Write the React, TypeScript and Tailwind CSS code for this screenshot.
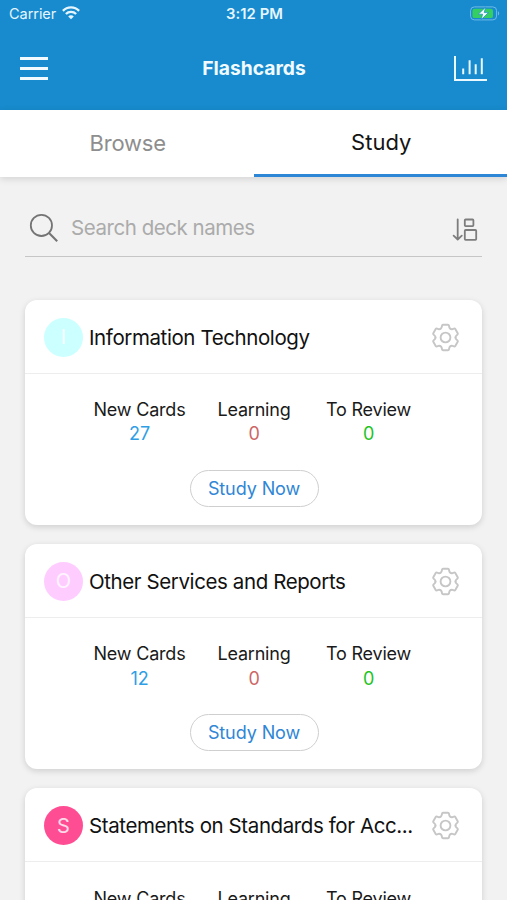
interface Deck {
  id: number;
  name: string;
  color: string;
  newCards: number;
  learning: number;
  toReview: number;
}

const decks: Deck[] = [
  {
    id: 1,
    name: "Information Technology",
    color: "bg-[#ccffff]",
    newCards: 27,
    learning: 0,
    toReview: 0,
  },
  {
    id: 2,
    name: "Other Services and Reports",
    color: "bg-[#ffccff]",
    newCards: 12,
    learning: 0,
    toReview: 0,
  },
  {
    id: 3,
    name: "Statements on Standards for Acc...",
    color: "bg-[#ff4d94]",
    newCards: 18,
    learning: 0,
    toReview: 0,
  },
];

const GearIcon = () => (
  <svg
    width="29"
    height="29"
    viewBox="-14.5 -14.5 29 29"
    fill="none"
    stroke="#c6c6c6"
    strokeWidth="1.9"
    strokeLinecap="round"
  >
    {[0, 60, 120, 180, 240, 300].map((angle) => (
      <path
        key={angle}
        transform={`rotate(${angle})`}
        d="M-5 -8.7Q-4 -9.2 -3.8 -10.3L-3.5 -11.8Q-3.3 -12.7 -2.4 -12.7H2.4Q3.3 -12.7 3.5 -11.8L3.8 -10.3Q4 -9.2 5 -8.7"
      />
    ))}
    <circle r="4.9" />
  </svg>
);

const StatusBar = () => (
  <div className="flex h-7 items-center justify-between pr-[7px] pl-[9px] text-[#e6f6ff]">
    <div className="flex flex-1 items-center gap-[6px]">
      <span className="text-[14.5px] tracking-[-0.05px]">Carrier</span>
      <svg
        className="-mt-[2px]"
        width="18"
        height="14"
        viewBox="0 0 18 14"
        fill="none"
      >
        <g stroke="currentColor" strokeWidth="2.3">
          <path d="M0.9 4.9C5.3 0.3 12.7 0.3 17.1 4.9" />
          <path d="M3.9 8C6.6 5.2 11.4 5.2 14.1 8" />
        </g>
        <path d="M6.2 10.4C7.8 9 10.2 9 11.8 10.4L9 13.3Z" fill="currentColor" />
      </svg>
    </div>
    <span className="text-[14.8px] font-semibold tracking-[0.1px]">3:12 PM</span>
    <div className="flex flex-1 justify-end">
      <svg
        className="-mt-[2px]"
        width="30"
        height="15"
        viewBox="0 0 30 15"
        fill="none"
      >
        <rect x="0.6" y="0.9" width="26" height="13" rx="3.8" stroke="#6fbbe8" />
        <path d="M28 5.3C29.6 5.9 29.6 8.9 28 9.5Z" fill="#6fbbe8" />
        <rect x="2.4" y="2.7" width="20.6" height="9.4" rx="2.2" fill="#35ce62" />
        <path
          d="M15.6 1.2L8.3 8.2H12.6L11.2 13.6L18.5 6.6H14.2Z"
          fill="#f3fffb"
          stroke="#178bcd"
          strokeWidth="0.7"
        />
      </svg>
    </div>
  </div>
);

const NavBar = () => (
  <div className="flex h-20 items-center justify-between pr-5 pl-5">
    <button className="flex w-[35px] flex-col gap-[7px]">
      <span className="h-[3px] w-7 bg-[#f1faff]" />
      <span className="h-[3px] w-7 bg-[#f1faff]" />
      <span className="h-[3px] w-7 bg-[#f1faff]" />
    </button>
    <h1 className="text-[19.3px] font-bold text-[#f1faff]">Flashcards</h1>
    <button>
      <svg
        width="34"
        height="27"
        viewBox="0 0 34 27"
        fill="none"
        stroke="#eaf8ff"
        strokeWidth="2"
      >
        <path d="M2 1V25H34" />
        <path d="M10.2 13.5V19.3M16.6 5.3V19.3M22.7 9.3V19.3M28.8 3.2V19.3" />
      </svg>
    </button>
  </div>
);

const Tabs = () => (
  <div className="flex h-[67px] shrink-0 bg-white text-[22px] shadow-[0_2px_7px_rgba(0,0,0,0.13)]">
    <button className="flex-1 pl-0.5 tracking-[-0.2px] text-[#8e8e8e]">
      Browse
    </button>
    <button className="flex-1 border-b-3 border-[#2e86d6] pt-[2px] pl-0.5 text-[#141414]">
      Study
    </button>
  </div>
);

const SearchBar = () => (
  <div className="mx-[25px] mt-[24px] flex h-[56px] shrink-0 items-center border-b-[1.5px] border-[#c6c6c6] pr-[4px] pl-1">
    <svg
      width="30"
      height="30"
      viewBox="0 0 30 30"
      fill="none"
      stroke="#747474"
      strokeWidth="1.8"
    >
      <circle cx="12.4" cy="12.4" r="10.6" />
      <path d="M19.8 19.8L28.2 28.2" strokeWidth="2.1" />
    </svg>
    <span className="ml-3 flex-1 text-[20.5px] tracking-[-0.45px] text-[#ababab]">
      Search deck names
    </span>
    <svg
      className="mt-[3px]"
      width="26"
      height="24"
      viewBox="0 0 26 24"
      fill="none"
      stroke="#7d7d7d"
      strokeWidth="1.8"
      strokeLinecap="round"
      strokeLinejoin="round"
    >
      <path d="M5.7 1.3V21.2M1.6 17.7L5.7 21.5L9.8 17.7" />
      <rect x="12.8" y="1.5" width="8.6" height="6.6" rx="0.8" />
      <rect x="12.8" y="12" width="11.4" height="9.8" rx="0.8" />
    </svg>
  </div>
);

const DeckCard = ({ deck }: { deck: Deck }) => (
  <div className="h-[225.4px] shrink-0 rounded-xl bg-white shadow-[0_2px_6px_rgba(0,0,0,0.15)]">
    <div className="flex h-[74px] items-center border-b border-[#ededed] pt-[2px] pr-[22px] pl-[19px]">
      <div
        className={`flex h-[39px] w-[39px] shrink-0 items-center justify-center rounded-full text-[20px] text-white/80 ${deck.color}`}
      >
        {deck.name[0]}
      </div>
      <h2 className="ml-[6px] pt-0.5 text-[20.5px] tracking-[-0.4px] whitespace-nowrap text-[#111]">
        {deck.name}
      </h2>
      <button className="ml-auto shrink-0">
        <GearIcon />
      </button>
    </div>
    <div className="mt-[24.3px] flex justify-center pl-px text-center text-[18px] leading-[24.5px] tracking-[-0.2px] text-[#1a1a1a]">
      <div className="w-[114.5px]">
        <p>New Cards</p>
        <p className="text-[#2f9ee5]">{deck.newCards}</p>
      </div>
      <div className="w-[114.5px]">
        <p>Learning</p>
        <p className="text-[#cc6666]">{deck.learning}</p>
      </div>
      <div className="w-[114.5px]">
        <p>To Review</p>
        <p className="text-[#1fc41f]">{deck.toReview}</p>
      </div>
    </div>
    <div className="mt-[23px] flex justify-center pl-px">
      <button className="flex h-[37px] w-[129px] items-center justify-center rounded-full border-[1.5px] border-[#cfcfcf] text-[18px] tracking-[-0.1px] text-[#2f86d6]">
        Study Now
      </button>
    </div>
  </div>
);

const App = () => {
  return (
    <div className="flex h-[900px] w-[507px] flex-col overflow-hidden bg-[#f2f2f2] font-['Inter','Liberation_Sans',sans-serif]">
      <header className="h-[109.5px] shrink-0 bg-[#178bcd]">
        <StatusBar />
        <NavBar />
      </header>
      <Tabs />
      <SearchBar />
      <main className="mx-[25px] mt-[43px] flex flex-col gap-[19px]">
        {decks.map((deck) => (
          <DeckCard key={deck.id} deck={deck} />
        ))}
      </main>
    </div>
  );
};

export default App;
